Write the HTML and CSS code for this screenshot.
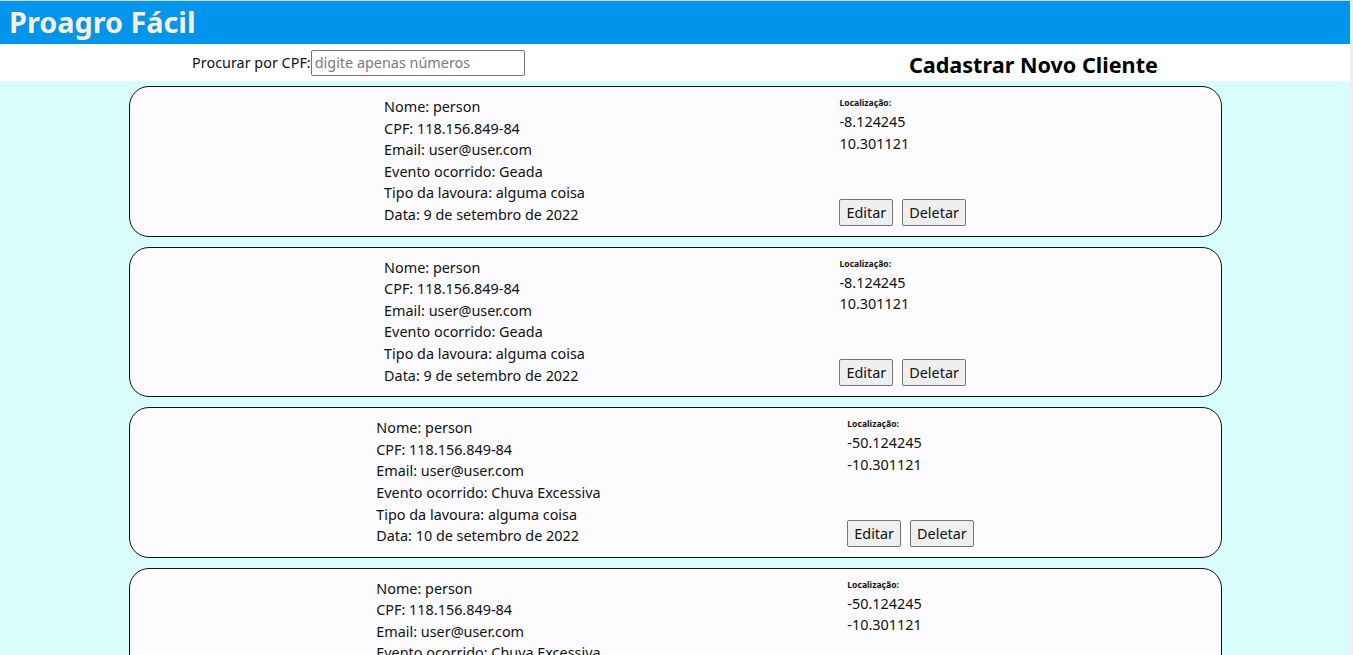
FILE: index.html
```html
<!DOCTYPE html>
<html lang="pt-BR">
<head>
<meta charset="utf-8">
<title>Proagro Fácil</title>
<link rel="stylesheet" href="styles.css">
</head>
<body>
<header class="topbar">
  <h1 class="brand">Proagro Fácil</h1>
</header>
<div class="toolbar">
  <div class="search">
    <label class="search-label" for="cpf">Procurar por CPF:</label><input id="cpf" class="search-input" type="text" placeholder="digite apenas números">
  </div>
  <h2 class="new-client">Cadastrar Novo Cliente</h2>
</div>
<main class="list">
  <article class="card">
    <div class="info">
      <p>Nome: person</p>
      <p>CPF: 118.156.849-84</p>
      <p>Email: user@user.com</p>
      <p>Evento ocorrido: Geada</p>
      <p>Tipo da lavoura: alguma coisa</p>
      <p>Data: 9 de setembro de 2022</p>
    </div>
    <div class="side">
      <h5 class="loc-title">Localização:</h5>
      <p>-8.124245</p>
      <p>10.301121</p>
      <div class="actions"><button class="btn">Editar</button><button class="btn">Deletar</button></div>
    </div>
  </article>
  <article class="card">
    <div class="info">
      <p>Nome: person</p>
      <p>CPF: 118.156.849-84</p>
      <p>Email: user@user.com</p>
      <p>Evento ocorrido: Geada</p>
      <p>Tipo da lavoura: alguma coisa</p>
      <p>Data: 9 de setembro de 2022</p>
    </div>
    <div class="side">
      <h5 class="loc-title">Localização:</h5>
      <p>-8.124245</p>
      <p>10.301121</p>
      <div class="actions"><button class="btn">Editar</button><button class="btn">Deletar</button></div>
    </div>
  </article>
  <article class="card">
    <div class="info">
      <p>Nome: person</p>
      <p>CPF: 118.156.849-84</p>
      <p>Email: user@user.com</p>
      <p>Evento ocorrido: Chuva Excessiva</p>
      <p>Tipo da lavoura: alguma coisa</p>
      <p>Data: 10 de setembro de 2022</p>
    </div>
    <div class="side">
      <h5 class="loc-title">Localização:</h5>
      <p>-50.124245</p>
      <p>-10.301121</p>
      <div class="actions"><button class="btn">Editar</button><button class="btn">Deletar</button></div>
    </div>
  </article>
  <article class="card">
    <div class="info">
      <p>Nome: person</p>
      <p>CPF: 118.156.849-84</p>
      <p>Email: user@user.com</p>
      <p>Evento ocorrido: Chuva Excessiva</p>
      <p>Tipo da lavoura: alguma coisa</p>
      <p>Data: 10 de setembro de 2022</p>
    </div>
    <div class="side">
      <h5 class="loc-title">Localização:</h5>
      <p>-50.124245</p>
      <p>-10.301121</p>
      <div class="actions"><button class="btn">Editar</button><button class="btn">Deletar</button></div>
    </div>
  </article>
</main>
</body>
</html>
```
FILE: styles.css
```css
html {
  margin: 0;
  padding: 0;
  background: #efefef;
}

body {
  margin: 0 3px 0 0;
  padding: 0;
  font-family: "Noto Sans", "Open Sans", sans-serif;
  font-size: 14.4px;
  color: #111;
  background: #d9fdfd;
}

.topbar {
  background: #0095ec;
  border-top: 1px solid #d4d4d4;
  padding: 1px 9px 2px;
}

.brand {
  margin: 0;
  font-size: 28.8px;
  font-weight: 700;
  line-height: 40px;
  color: #fbefdc;
}

.toolbar {
  background: #fff;
  height: 37px;
  display: flex;
  justify-content: space-around;
  align-items: center;
}

.search {
  display: flex;
  align-items: center;
}

.search-label {
  color: #111;
}

.search-input {
  box-sizing: border-box;
  width: 214px;
  height: 26px;
  margin: 0;
  padding: 1px 3px;
  border: 1px solid #767676;
  border-radius: 2px;
  font-family: inherit;
  font-size: 14.4px;
  color: #111;
}

.search-input::placeholder {
  color: #7a7a7a;
}

.new-client {
  margin: 4px 0 0;
  font-size: 21.6px;
  font-weight: 700;
  line-height: 28px;
  color: #000;
}

.list {
  padding: 5px 0 10px;
  display: flex;
  flex-direction: column;
  gap: 10px;
  align-items: center;
}

.card {
  box-sizing: border-box;
  width: 1093px;
  background: #fcfcff;
  border: 1px solid #111;
  border-radius: 20px;
  display: flex;
  justify-content: space-evenly;
  padding: 9px 0 10px;
}

.info p,
.side p {
  margin: 0;
  line-height: 21.6px;
}

.side {
  display: flex;
  flex-direction: column;
}

.loc-title {
  margin: 1px 0 2px;
  font-size: 8.6px;
  font-weight: 700;
  line-height: 12px;
}

.actions {
  margin-top: auto;
  display: flex;
  gap: 9px;
}

.btn {
  font-family: inherit;
  font-size: 14.4px;
  color: #111;
  background: #efefef;
  border: 1px solid #767676;
  border-radius: 2px;
  padding: 2px 6px;
  line-height: 21px;
  height: 27px;
  box-sizing: border-box;
}
```
